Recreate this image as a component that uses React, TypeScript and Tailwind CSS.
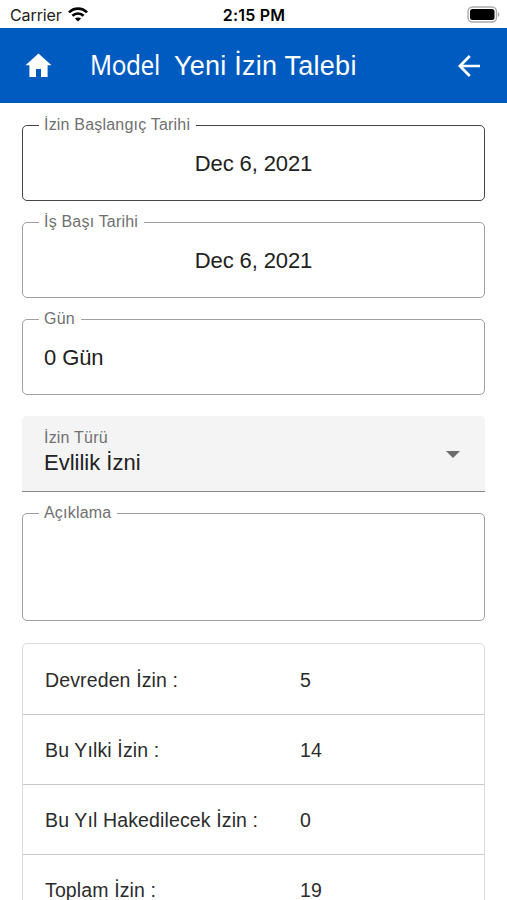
import type { ReactNode } from 'react';

const balances: { label: string; value: number }[] = [
  { label: 'Devreden İzin :', value: 5 },
  { label: 'Bu Yılki İzin :', value: 14 },
  { label: 'Bu Yıl Hakedilecek İzin :', value: 0 },
  { label: 'Toplam İzin :', value: 19 },
];

function StatusBar() {
  return (
    <div className="grid h-7 grid-cols-3 items-center pt-0.5 pl-2.5 pr-[7px] font-['Inter','Liberation_Sans',sans-serif] text-[16px] text-[#222]">
      <div className="flex items-center gap-[6px]">
        <span className="tracking-[-0.1px]">Carrier</span>
        <svg className="-mt-0.5" width="20" height="15" viewBox="0 0 20 15" fill="none" stroke="#000" strokeWidth="2.7">
          <path d="M1 5.4C6 0.3 14 0.3 19 5.4" />
          <path d="M4.4 8.8C7.6 5.7 12.4 5.7 15.6 8.8" />
          <path d="M10 14.6 6.9 11.5C8.7 10 11.3 10 13.1 11.5Z" fill="#000" stroke="none" />
        </svg>
      </div>
      <span className="-ml-0.5 text-center font-semibold tracking-[0.2px] text-black">2:15 PM</span>
      <svg className="-mt-0.5 justify-self-end" width="33" height="17" viewBox="0 0 33 17">
        <rect x="1" y="1" width="28.5" height="15" rx="4.5" fill="none" stroke="#aaa" strokeWidth="1.4" />
        <rect x="3" y="3" width="24.5" height="11" rx="2.5" fill="#000" />
        <path d="M31 6c1.8.8 1.8 4.2 0 5Z" fill="#aaa" />
      </svg>
    </div>
  );
}

function Header() {
  return (
    <header className="flex h-[75px] items-center bg-[#005bc1] pl-[25px] pr-[27px] text-white">
      <svg className="-mt-px" width="27" height="24" viewBox="0 0 27 24" fill="currentColor">
        <path d="M13.5 0.5 26.5 12.2H22.6V24H16V16H11V24H4.4V12.2H0.5Z" />
      </svg>
      <h1 className="ml-[38px] flex flex-1 items-baseline whitespace-pre text-[27px]">
        <span className="w-[84px] origin-left scale-x-[0.9] font-['Noto_Sans',sans-serif] text-[27px] tracking-[-0.4px]">Model</span>
        <span className="tracking-[0.25px]">Yeni İzin Talebi</span>
      </h1>
      <svg width="22" height="22" viewBox="0 0 22 22" fill="none" stroke="currentColor" strokeWidth="2.7">
        <path d="M22 11H2.5M11.8 1 1.9 11 11.8 21" />
      </svg>
    </header>
  );
}

function Field({ label, active, className, children }: { label: string; active?: boolean; className: string; children?: ReactNode }) {
  return (
    <div className={`relative flex items-center rounded-[5px] border px-[21px] text-[22px] tracking-[-0.1px] text-[#212121] ${active ? 'border-[#444]' : 'border-[#a0a0a0]'} ${className}`}>
      <span className="absolute -top-3 left-4 bg-white pr-[6px] pl-[5px] text-[16px] leading-[22px] tracking-[0.2px] text-[#707070]">{label}</span>
      {children}
    </div>
  );
}

export default function App() {
  return (
    <div className="h-[900px] w-[507px] overflow-hidden bg-white font-['Liberation_Sans',Arial,sans-serif]">
      <StatusBar />
      <Header />
      <main className="flex flex-col px-[22px] pt-[22px]">
        <div className="flex flex-col gap-[21px]">
          <Field label="İzin Başlangıç Tarihi" active className="h-[76px] justify-center">Dec 6, 2021</Field>
          <Field label="İş Başı Tarihi" className="h-[76px] justify-center">Dec 6, 2021</Field>
          <Field label="Gün" className="h-[76px]">0 Gün</Field>
          <div className="flex h-[76px] items-center justify-between rounded-t-[5px] border-b border-[#888] bg-[#f4f4f4] pl-[22px] pr-[25px]">
            <div className="flex flex-col pb-[5px]">
              <span className="text-[16px] leading-[22px] tracking-[0.2px] text-[#707070]">İzin Türü</span>
              <span className="text-[22px] leading-[27px] text-[#212121]">Evlilik İzni</span>
            </div>
            <svg className="mt-0.5" width="14" height="7" viewBox="0 0 14 7" fill="#6b6b6b">
              <path d="M0 0H14L7 7Z" />
            </svg>
          </div>
          <Field label="Açıklama" className="h-[108px]" />
        </div>
        <div className="mt-[22px] rounded-t-[5px] border border-[#dcdcdc] pt-px">
          {balances.map((b) => (
            <div key={b.label} className="flex h-[70px] items-center border-b border-[#c8c8c8] px-[22px] pt-[3px] text-[19.5px] tracking-[0.13px] text-[#2c2c2c]">
              <span className="w-[255px]">{b.label}</span>
              <span>{b.value}</span>
            </div>
          ))}
        </div>
      </main>
    </div>
  );
}
